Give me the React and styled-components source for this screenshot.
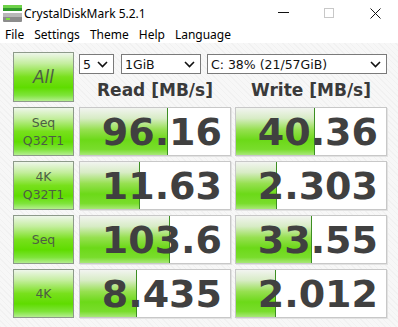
import React from 'react'
import styled, {createGlobalStyle} from 'styled-components'

const GlobalStyle = createGlobalStyle`
  html, body {
    margin: 0;
    padding: 0;
    background: #ffffff;
  }
  body {
    font-family: "Noto Sans", "DejaVu Sans", sans-serif;
  }
`

const Window = styled.div`
  width: 398px;
  height: 327px;
  overflow: hidden;
  display: flex;
  flex-direction: column;
  background: #ffffff;
`

const TitleBar = styled.div`
  height: 26px;
  display: flex;
  align-items: center;
  padding-left: 2px;
  font-size: 12px;
  color: #000;

  .title {
    margin-left: 1px;
    flex: 1;
  }
`

const Controls = styled.div`
  display: flex;
  height: 100%;

  span {
    width: 46px;
    display: flex;
    align-items: center;
    justify-content: center;
  }
`

const MenuBar = styled.ul`
  list-style: none;
  margin: 0;
  padding: 0 0 0 5px;
  height: 17px;
  display: flex;
  align-items: center;
  gap: 10px;
  font-size: 12px;
  color: #000;
`

const Main = styled.div`
  flex: 1;
  padding: 9px 0 0 13px;
  display: grid;
  grid-template-columns: 62px 152px 152px;
  grid-template-rows: 50px;
  grid-auto-rows: 49px;
  column-gap: 4px;
  row-gap: 5px;
  background-color: #f7f7f7;
  background-image: repeating-linear-gradient(
    45deg,
    rgba(0, 0, 0, 0.025) 0 1px,
    transparent 1px 4px
  );
`

const LabelButton = styled.div`
  width: 61px;
  box-sizing: border-box;
  border: 1px solid #8d9a8a;
  background: linear-gradient(
    to bottom,
    #eef6ea 0%,
    #c4ee9e 22%,
    #78e01c 50%,
    #5fdc00 72%,
    #7ee43a 88%,
    #b4ee90 100%
  );
  display: flex;
  flex-direction: column;
  align-items: center;
  justify-content: center;
  font-family: "DejaVu Sans", sans-serif;
  font-size: ${p => (p.$big ? '17px' : '12.5px')};
  font-style: ${p => (p.$big ? 'italic' : 'normal')};
  line-height: ${p => (p.$big ? '1' : '18px')};
  color: #4d5e45;
`

const Header = styled.div`
  grid-column: 2 / 4;
  display: flex;
  flex-direction: column;
`

const Combos = styled.div`
  margin-top: 2px;
  display: flex;
  gap: 7px;

  > *:last-child {
    margin-left: -1px;
  }
`

const Combo = styled.div`
  width: ${p => p.$w}px;
  height: 20px;
  box-sizing: border-box;
  border: 1px solid #7a7a7a;
  background: #fff;
  display: flex;
  align-items: center;
  justify-content: space-between;
  padding: 0 5px 0 3px;
  font-family: "DejaVu Sans", sans-serif;
  font-size: 12.5px;
  color: #111;
`

const Headings = styled.div`
  margin-top: 5px;
  display: grid;
  grid-template-columns: 152px 152px;
  column-gap: 4px;

  span {
    text-align: center;
    font-family: "DejaVu Sans", sans-serif;
    font-weight: bold;
    font-size: 17px;
    line-height: 22px;
    color: #3a3a3a;
  }
`

const Cell = styled.div`
  position: relative;
  box-sizing: border-box;
  border: 1px solid #c8c8c8;
  background: #ffffff;
  box-shadow: 1px 1px 0 #e2e2e2;
  display: flex;
  align-items: center;
  justify-content: flex-end;
  padding-right: 8px;
  overflow: hidden;
`

const Bar = styled.div`
  position: absolute;
  left: 0;
  top: 0;
  bottom: 0;
  box-sizing: border-box;
  border-right: 1px solid #3c8e22;
  background: linear-gradient(
    to bottom,
    #f2f4f0 0%,
    #d8ecc6 22%,
    #96e050 46%,
    #6cd918 68%,
    #79dd2c 88%,
    #a8e878 100%
  );
`

const Value = styled.span`
  position: relative;
  font-family: "DejaVu Sans", sans-serif;
  font-weight: bold;
  font-size: 38px;
  color: #404040;
  line-height: 1;
`

const Chevron = () => (
  <svg width="11" height="7" viewBox="0 0 11 7">
    <path d="M1 1 L5.5 5.5 L10 1" fill="none" stroke="#111" strokeWidth="1.6" />
  </svg>
)

const AppIcon = () => (
  <svg width="21" height="19" viewBox="0 0 21 19">
    <rect x="1" y="1" width="19" height="3" fill="#6fd24a" />
    <rect x="1" y="4" width="19" height="3" fill="#2f9a2a" />
    <rect x="1" y="9" width="19" height="9" rx="1" fill="#8c8c8c" />
    <rect x="1" y="9" width="19" height="4" fill="#b8b8b8" />
    <rect x="4" y="14" width="4" height="2" fill="#7ee040" />
  </svg>
)

const rows = [
  {label: ['Seq', 'Q32T1'], read: '96.16', rw: 88, write: '40.36', ww: 79},
  {label: ['4K', 'Q32T1'], read: '11.63', rw: 60, write: '2.303', ww: 41},
  {label: ['Seq'], read: '103.6', rw: 90, write: '33.55', ww: 76},
  {label: ['4K'], read: '8.435', rw: 57, write: '2.012', ww: 40},
]

const Result = ({value, width}) => (
  <Cell>
    <Bar style={{width}} />
    <Value>{value}</Value>
  </Cell>
)

const App = () => {
  return (
    <>
      <GlobalStyle />
      <Window>
        <TitleBar>
          <AppIcon />
          <span className="title">CrystalDiskMark 5.2.1</span>
          <Controls>
            <span>
              <svg width="11" height="2"><rect width="11" height="1" fill="#111" /></svg>
            </span>
            <span>
              <svg width="10" height="10"><rect x="0.5" y="0.5" width="9" height="9" fill="none" stroke="#c8c8c8" /></svg>
            </span>
            <span>
              <svg width="11" height="11" viewBox="0 0 11 11">
                <path d="M0.5 0.5 L10.5 10.5 M10.5 0.5 L0.5 10.5" stroke="#111" strokeWidth="1" />
              </svg>
            </span>
          </Controls>
        </TitleBar>
        <MenuBar>
          <li>File</li>
          <li>Settings</li>
          <li>Theme</li>
          <li>Help</li>
          <li>Language</li>
        </MenuBar>
        <Main>
          <LabelButton $big>All</LabelButton>
          <Header>
            <Combos>
              <Combo $w={35}>5 <Chevron /></Combo>
              <Combo $w={80}>1GiB <Chevron /></Combo>
              <Combo $w={180}>C: 38% (21/57GiB) <Chevron /></Combo>
            </Combos>
            <Headings>
              <span>Read [MB/s]</span>
              <span>Write [MB/s]</span>
            </Headings>
          </Header>
          {rows.map(r => (
            <React.Fragment key={r.label.join('-') + r.read}>
              <LabelButton>
                {r.label.map(l => <span key={l}>{l}</span>)}
              </LabelButton>
              <Result value={r.read} width={r.rw} />
              <Result value={r.write} width={r.ww} />
            </React.Fragment>
          ))}
        </Main>
      </Window>
    </>
  )
}

export default App
